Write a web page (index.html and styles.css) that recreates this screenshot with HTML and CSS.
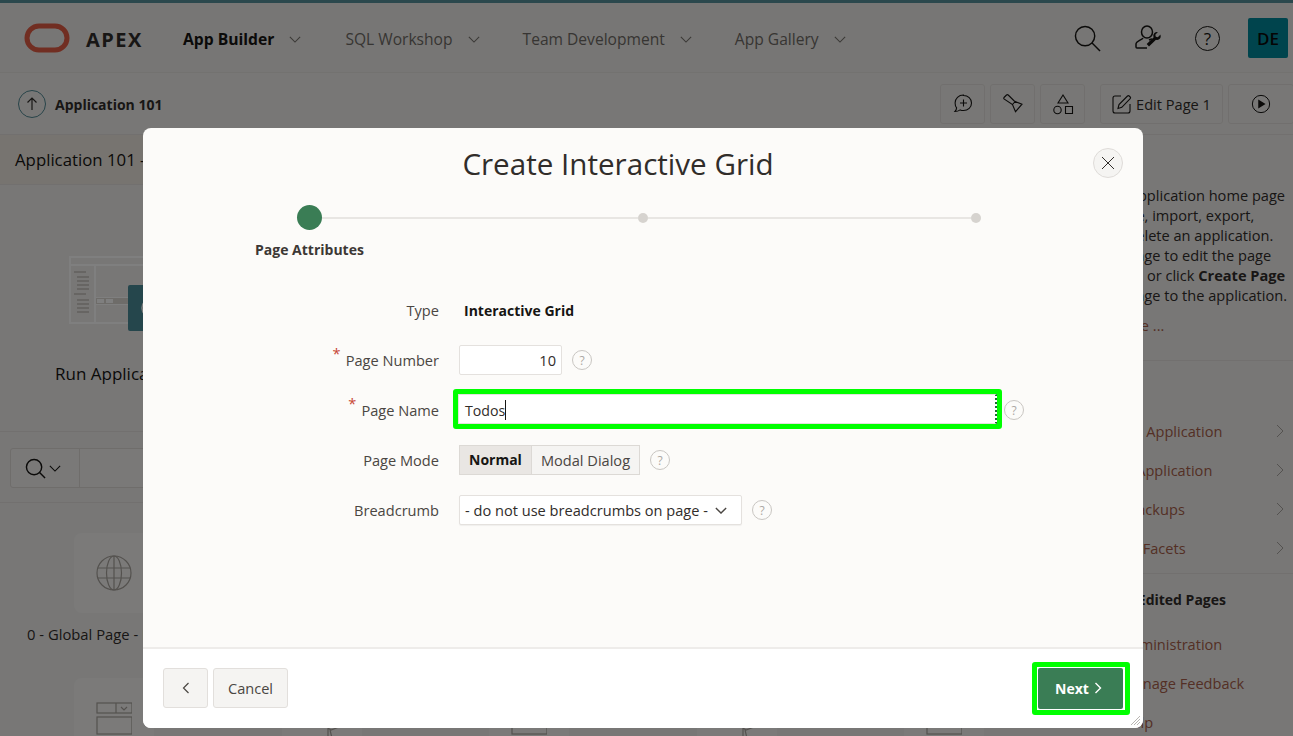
FILE: index.html
```html
<!DOCTYPE html>
<html lang="en">
<head>
    <meta charset="UTF-8">
    <meta name="viewport" content="width=device-width, initial-scale=1.0">
    <title>Create Interactive Grid</title>
    <link rel="stylesheet" href="styles.css">
</head>
<body>

<!-- page behind the dialog -->
<header class="header">
    <svg class="logo" width="46" height="30" viewBox="0 0 46 30"><rect x="3" y="3" width="40" height="24" rx="12" fill="none" stroke="currentColor" stroke-width="5"/></svg>
    <span class="brand">APEX</span>
    <nav class="nav">
        <a class="nav-item nav-current">App Builder <svg class="chev" width="12" height="7" viewBox="0 0 14 8"><path d="M1 1l6 6 6-6"/></svg></a>
        <a class="nav-item">SQL Workshop <svg class="chev" width="12" height="7" viewBox="0 0 14 8"><path d="M1 1l6 6 6-6"/></svg></a>
        <a class="nav-item">Team Development <svg class="chev" width="12" height="7" viewBox="0 0 14 8"><path d="M1 1l6 6 6-6"/></svg></a>
        <a class="nav-item">App Gallery <svg class="chev" width="12" height="7" viewBox="0 0 14 8"><path d="M1 1l6 6 6-6"/></svg></a>
    </nav>
    <div class="header-tools">
        <svg class="line-icon" width="27" height="27" viewBox="0 0 28 28"><circle cx="11.5" cy="11.5" r="10"/><path d="M18.5 18.5l8.500 8.500"/></svg>
        <svg class="line-icon" width="28" height="28" viewBox="0 0 28 28"><ellipse cx="13" cy="8" rx="5.5" ry="6"/><path d="M9 14c-1 2-7 3-7 6v3c0 .6.4 1 1 1h10M18 15c-1 0-2 .5-3 1"/><path class="wrench" d="M26.500 10.500l-2.700 2.700-2-.5-.5-2 2.600-2.600c-2.200-.6-4.600 1-4.600 3.500 0 .7.100 1.200.4 1.700l-7 6.700 2.300 2.500 7-6.800c2.800 1 5.500-1.400 4.500-4.700z"/></svg>
        <span class="help-large">?</span>
        <span class="avatar">DE</span>
    </div>
</header>

<div class="toolbar">
    <span class="up-circle"><svg width="12" height="14" viewBox="0 0 12 14"><path d="M6 13V1M1.500 5.500L6 1l4.500 4.500"/></svg></span>
    <span class="crumb">Application 101</span>
    <div class="toolbar-actions">
        <button class="tool-btn"><svg class="line-icon" width="22" height="22" viewBox="0 0 22 22"><path d="M11.500 2.500c4.500 0 8 3 8 7.500s-3.500 7.500-8 7.500c-1.200 0-2.300-.2-3.300-.6-1.500 1-3.200 1.600-5.200 1.600 1-1 1.500-2.200 1.600-3.600-1-1.300-1.500-3-1.500-4.900 0-4.500 3.500-8 8.400-8zM11.500 6.500v7M8 10h7"/></svg></button>
        <button class="tool-btn"><svg class="line-icon" width="22" height="22" viewBox="0 0 22 22"><path d="M2 4.500L4.500 2c.6-.5 1.200-.5 1.700 0l6.300 6.200 7.500 3-6.500 7.500-3-7.200L2 5.900c-.3-.4-.3-1 0-1.400zM10.500 11.500l3-3.300"/></svg></button>
        <button class="tool-btn"><svg class="line-icon" width="22" height="22" viewBox="0 0 22 22"><path d="M11 2l5 8H6zM13.500 13.500h7v7h-7z"/><circle cx="5.500" cy="17" r="3.700"/></svg></button>
        <button class="tool-btn tool-edit"><svg class="line-icon" width="20" height="20" viewBox="0 0 20 20"><path d="M9 2H3c-1 0-2 .8-2 2v13c0 1 .8 2 2 2h13c1 0 2-.8 2-2v-7"/><path d="M6 14.500l1-4L15.500 2c.6-.5 1.200-.5 1.700 0l1 1c.5.500.5 1.200 0 1.700L9.800 13.300z"/></svg> Edit Page 1</button>
        <button class="tool-btn tool-run"><svg class="line-icon" width="20" height="20" viewBox="0 0 22 22"><circle cx="11" cy="11" r="9.500"/><path class="solid" d="M8 6l8 5-8 5z"/></svg></button>
    </div>
</div>

<div class="workspace">
    <main class="main">
        <h2 class="app-title">Application 101 - Todos</h2>
        <section class="hero">
            <div class="hero-item">
                <svg class="hero-art" width="106" height="76" viewBox="0 0 106 76">
                    <rect class="art-frame" x="1" y="1" width="104" height="66"/>
                    <path class="art-frame" d="M1 9h104M26 9v58M26 42h79M26 48h79"/>
                    <rect class="art-bar" x="27" y="42" width="78" height="6"/>
                    <path class="art-blocks" d="M28 45h7M37 45h7"/>
                    <path class="art-lines" d="M5 16h12M8 21h12M8 25h12M8 29h12M8 33h12M5 38h12M8 44h12M8 48h12M8 52h12M8 56h12"/>
                    <rect class="art-teal" x="59" y="29" width="47" height="46" rx="2"/>
                    <circle class="art-ring" cx="82" cy="52" r="9"/>
                </svg>
                <span class="hero-label">Run Application</span>
            </div>
        </section>
        <div class="search-row">
            <div class="search-box">
                <span class="search-btn">
                    <svg class="line-icon" width="21" height="21" viewBox="0 0 22 22"><circle cx="9.500" cy="9.500" r="8"/><path d="M15 15l6 6"/></svg>
                    <svg class="chev chev-dark" width="12" height="7" viewBox="0 0 14 8"><path d="M1 1l6 6 6-6"/></svg>
                </span>
            </div>
        </div>
        <div class="page-grid">
            <div class="page-card">
                <span class="card-tile">
                    <svg class="card-icon" width="36" height="36" viewBox="0 0 36 36"><circle cx="18" cy="18" r="17"/><ellipse cx="18" cy="18" rx="7.500" ry="17"/><path d="M18 1v34M1.500 13h33M1.500 23h33"/></svg>
                </span>
                <span class="card-label">0 - Global Page - Desktop</span>
            </div>
            <div class="page-card"><span class="card-tile"></span></div>
            <div class="page-card"><span class="card-tile"></span></div>
            <div class="page-card"><span class="card-tile"></span></div>
            <div class="page-card"><span class="card-tile"></span></div>

            <div class="page-card">
                <span class="card-tile card-tile-low">
                    <svg class="card-icon" width="36" height="36" viewBox="0 0 36 36"><rect x="1" y="1" width="35" height="10"/><path d="M20 1v10M25 5l3 3 3-3"/><rect x="1" y="15" width="35" height="17"/></svg>
                </span>
            </div>
            <div class="page-card">
                <span class="card-tile card-tile-low">
                    <svg class="card-icon" width="36" height="36" viewBox="0 0 36 36"><path d="M24 36V26l3 2 8-3M28 36l-2-8"/></svg>
                </span>
            </div>
            <div class="page-card">
                <span class="card-tile card-tile-low">
                    <svg class="card-icon" width="36" height="36" viewBox="0 0 36 36"><rect x="1" y="15" width="35" height="17"/></svg>
                </span>
            </div>
            <div class="page-card">
                <span class="card-tile card-tile-low">
                    <svg class="card-icon" width="36" height="36" viewBox="0 0 36 36"><path d="M24 36V26l3 2 8-3M28 36l-2-8"/></svg>
                </span>
            </div>
            <div class="page-card">
                <span class="card-tile card-tile-low">
                    <svg class="card-icon" width="36" height="36" viewBox="0 0 36 36"><rect x="1" y="15" width="35" height="17"/></svg>
                </span>
            </div>
        </div>
    </main>

    <aside class="sidebar">
        <p class="about">In application home page<br>Save, import, export,<br>&thinsp;a delete an application.<br>&thinsp;a page to edit the page<br>info, or click <b>Create Page</b><br>&thinsp;a page to the application.</p>
        <p class="about-more"><a>More ...</a></p>
        <div class="side-section side-tasks">
            <a class="side-link">Edit&ensp;Application <svg class="side-chev" width="8" height="14" viewBox="0 0 8 14"><path d="M1 1l6 6-6 6"/></svg></a>
            <a class="side-link">Go Application <svg class="side-chev" width="8" height="14" viewBox="0 0 8 14"><path d="M1 1l6 6-6 6"/></svg></a>
            <a class="side-link">Is Backups <svg class="side-chev" width="8" height="14" viewBox="0 0 8 14"><path d="M1 1l6 6-6 6"/></svg></a>
            <a class="side-link">Edit Facets <svg class="side-chev" width="8" height="14" viewBox="0 0 8 14"><path d="M1 1l6 6-6 6"/></svg></a>
        </div>
        <div class="side-section">
            <h3 class="side-title">My Edited Pages</h3>
            <a class="side-link">- Administration</a>
            <a class="side-link">- Manage Feedback</a>
            <a class="side-link">- Help</a>
        </div>
    </aside>
</div>

<div class="overlay"></div>

<!-- wizard dialog -->
<div class="dialog">
    <div class="dialog-head">
        <h1 class="dialog-title">Create Interactive Grid</h1>
        <button class="close-btn"><svg width="14" height="14" viewBox="0 0 14 14"><path d="M1 1l12 12M13 1L1 13"/></svg></button>
    </div>

    <div class="wizard">
        <div class="wizard-track">
            <span class="step-current"></span>
            <span class="step-line step-line-a"></span>
            <span class="step-dot"></span>
            <span class="step-line step-line-b"></span>
            <span class="step-dot"></span>
        </div>
        <div class="step-label">Page Attributes</div>
    </div>

    <form class="form">
        <div class="row">
            <label class="label">Type</label>
            <strong class="value">Interactive Grid</strong>
        </div>
        <div class="row">
            <label class="label"><span class="req">*</span>Page Number</label>
            <input class="input input-number" type="text" value="10">
            <span class="help">?</span>
        </div>
        <div class="row">
            <label class="label"><span class="req">*</span>Page Name</label>
            <span class="mark mark-field">
                <span class="input input-name">Todos<i class="caret"></i></span>
            </span>
            <span class="help help-tight">?</span>
        </div>
        <div class="row">
            <label class="label">Page Mode</label>
            <div class="segments">
                <span class="segment segment-on">Normal</span>
                <span class="segment">Modal Dialog</span>
            </div>
            <span class="help">?</span>
        </div>
        <div class="row">
            <label class="label">Breadcrumb</label>
            <span class="input input-select">- do not use breadcrumbs on page -
                <svg class="chev chev-select" width="12" height="7" viewBox="0 0 14 8"><path d="M1 1l6 6 6-6"/></svg>
            </span>
            <span class="help">?</span>
        </div>
    </form>

    <div class="dialog-foot">
        <button class="btn btn-back"><svg width="8" height="12" viewBox="0 0 8 12"><path d="M6.500 1l-5 5 5 5"/></svg></button>
        <button class="btn btn-cancel">Cancel</button>
        <span class="mark mark-next">
            <button class="btn-next">Next <svg width="8" height="12" viewBox="0 0 8 12"><path d="M1.500 1l5 5-5 5"/></svg></button>
        </span>
    </div>
    <svg class="resize" width="11" height="11" viewBox="0 0 11 11"><path d="M1 10l9-9M4 10l6-6M7 10l3-3"/></svg>
</div>

</body>
</html>
```

FILE: styles.css
```css
* {
    box-sizing: border-box;
}
body {
    position: relative;
    margin: 0;
    width: 1293px;
    height: 736px;
    overflow: hidden;
    font-family: "Open Sans", Arial, sans-serif;
    font-size: 14.6px;
    color: #161513;
    background-color: #f1efed;
}
button {
    font-family: inherit;
}
svg {
    display: block;
    flex: none;
}
.line-icon {
    fill: none;
    stroke: #161513;
    stroke-width: 1.5;
}
.line-icon .solid {
    fill: #161513;
    stroke: none;
}
.line-icon .wrench {
    fill: #161513;
    stroke: none;
}
.chev {
    fill: none;
    stroke: #77736e;
    stroke-width: 1.3;
}
.chev-dark {
    stroke: #161513;
}

/* header */
.header {
    display: flex;
    align-items: center;
    height: 73px;
    padding: 1px 5px 0 24px;
    border-top: 3px solid #57919b;
    border-bottom: 1px solid #e7e4e1;
    background-color: #efedea;
}
.logo {
    color: #e25c45;
}
.brand {
    margin: 2px 0 0 16px;
    font-size: 20px;
    font-weight: 700;
    letter-spacing: 1.5px;
    color: #312d2a;
}
.nav {
    display: flex;
    margin: 2px 0 0 40px;
}
.nav-item {
    display: flex;
    align-items: center;
    gap: 15px;
    margin-right: 43px;
    font-size: 15.6px;
    color: #6f6b66;
}
.nav-current {
    margin-right: 44px;
    font-size: 15.7px;
    font-weight: 700;
    color: #161513;
}
.header-tools {
    display: flex;
    align-items: center;
    gap: 33px;
    margin-left: auto;
}
.help-large {
    display: flex;
    align-items: center;
    justify-content: center;
    width: 25px;
    height: 25px;
    border: 1.5px solid #161513;
    border-radius: 50%;
    font-size: 17px;
}
.avatar {
    display: flex;
    align-items: center;
    justify-content: center;
    width: 40px;
    height: 40px;
    margin-left: -5px;
    border-radius: 2px;
    font-size: 17px;
    font-weight: 600;
    color: #0a0a0a;
    background-color: #00899b;
}

/* toolbar */
.toolbar {
    display: flex;
    align-items: center;
    height: 62px;
    padding: 1px 0 0 18px;
    border-bottom: 1px solid #e4e1de;
    background-color: #f1efed;
}
.up-circle {
    display: flex;
    align-items: center;
    justify-content: center;
    width: 28px;
    height: 28px;
    border: 1px solid #4f8792;
    border-radius: 50%;
}
.up-circle svg {
    fill: none;
    stroke: #312d2a;
    stroke-width: 1.2;
}
.crumb {
    margin-left: 9px;
    font-size: 14px;
    font-weight: 700;
    color: #312d2a;
}
.toolbar-actions {
    display: flex;
    gap: 5px;
    margin-left: auto;
    margin-right: -1px;
}
.toolbar-actions .line-icon {
    stroke-width: 1.1;
}
.tool-btn {
    display: flex;
    align-items: center;
    justify-content: center;
    gap: 4px;
    width: 45px;
    height: 40px;
    padding: 0;
    border: 1px solid #e2dfdc;
    border-radius: 3px;
    font-size: 14.6px;
    color: #312d2a;
    background-color: #f1efed;
}
.tool-edit {
    width: 123px;
    margin-left: 10px;
}
.tool-run {
    width: 66px;
}

/* main column */
.workspace {
    display: flex;
    height: 601px;
    overflow: hidden;
}
.main {
    width: 1113px;
    flex: none;
}
.app-title {
    height: 50px;
    margin: 0;
    padding-left: 15px;
    border-bottom: 1px solid #e4e1de;
    font-size: 16.8px;
    font-weight: 400;
    line-height: 49px;
    background-color: #efe9e0;
}
.hero {
    height: 247px;
    padding: 71px 0 0 55px;
    border-bottom: 1px solid #e4e1de;
}
.hero-item {
    display: flex;
    flex-direction: column;
    align-items: flex-start;
}
.hero-art {
    margin-left: 14px;
}
.art-frame {
    fill: none;
    stroke: #fff;
    stroke-width: 2;
}
.art-bar {
    fill: #dcd8d3;
}
.art-blocks {
    fill: none;
    stroke: #fff;
    stroke-width: 4;
}
.art-lines {
    stroke: #c4bfb9;
    stroke-width: 1.500;
    fill: none;
}
.art-teal {
    fill: #4a8c99;
}
.art-ring {
    fill: none;
    stroke: #fff;
    stroke-width: 1.500;
}
.hero-label {
    margin-top: 30px;
    font-size: 17px;
    line-height: 24px;
}
.search-row {
    height: 71px;
    padding: 16px 10px 0;
    border-bottom: 1px solid #e4e1de;
}
.search-box {
    height: 40px;
    border: 1px solid #dedad6;
    border-radius: 3px;
    background-color: #f5f3f1;
}
.search-btn {
    display: flex;
    align-items: center;
    gap: 3px;
    width: 69px;
    height: 38px;
    padding-left: 14px;
    border-right: 1px solid #dedad6;
}
.page-grid {
    display: grid;
    grid-template-columns: repeat(5, 207.5px);
    row-gap: 33px;
    padding: 30px 0 0 27px;
}
.page-card {
    display: flex;
    flex-direction: column;
    align-items: flex-start;
    min-height: 112px;
}
.card-tile {
    display: flex;
    align-items: center;
    justify-content: center;
    width: 80px;
    height: 80px;
    margin-left: 47px;
    border-radius: 8px;
    background-color: #f6f5f3;
}
.card-tile-low {
    align-items: flex-start;
    padding-top: 24px;
}
.card-icon {
    fill: none;
    stroke: #a8a39d;
    stroke-width: 1.200;
}
.card-label {
    margin-top: 11px;
    font-size: 14.8px;
    line-height: 20px;
    white-space: nowrap;
    color: #312d2a;
}

/* right column */
.sidebar {
    width: 180px;
    flex: none;
    white-space: nowrap;
}
.about {
    margin: 0;
    padding-top: 50px;
    line-height: 20px;
    color: #312d2a;
}
.about-more {
    margin: 10px 0 0;
    line-height: 20px;
    color: #a85f4a;
}
.side-section {
    display: flex;
    flex-direction: column;
    padding-bottom: 4px;
}
.side-tasks {
    margin-top: 25px;
    padding-top: 50px;
    padding-bottom: 6px;
    border-top: 1px solid #e4e1de;
    border-bottom: 1px solid #e4e1de;
}
.side-link {
    display: flex;
    align-items: center;
    justify-content: space-between;
    height: 39px;
    padding-right: 9px;
    color: #a85f4a;
}
.side-chev {
    fill: none;
    stroke: #a9a5a0;
    stroke-width: 1;
}
.side-title {
    margin: 16px 0 14px;
    font-size: 14px;
    line-height: 20px;
    color: #312d2a;
}

.overlay {
    position: absolute;
    inset: 0;
    background-color: rgba(0, 0, 0, 0.5);
}

/* dialog */
.dialog {
    position: absolute;
    left: 143px;
    top: 128px;
    display: flex;
    flex-direction: column;
    width: 1000px;
    height: 600px;
    overflow: hidden;
    border-radius: 8px;
    background-color: #fcfbf9;
}
.dialog-head {
    display: flex;
    align-items: center;
    height: 70px;
    padding: 0 20px 0 0;
}
.dialog-title {
    flex: 1;
    margin: 0;
    padding-top: 2px;
    font-size: 29.6px;
    font-weight: 500;
    line-height: 68px;
    text-align: center;
    color: #312d2a;
}
.close-btn {
    display: flex;
    align-items: center;
    justify-content: center;
    width: 30px;
    height: 30px;
    padding: 0;
    border: 1px solid #dfdcd9;
    border-radius: 50%;
    background-color: #f5f4f2;
}
.close-btn svg {
    fill: none;
    stroke: #312d2a;
    stroke-width: 1;
}
.wizard-track {
    display: flex;
    align-items: center;
    padding: 7px 0 0 154px;
}
.step-current {
    width: 25px;
    height: 25px;
    border-radius: 50%;
    background-color: #3a7d55;
}
.step-dot {
    width: 10px;
    height: 10px;
    border-radius: 50%;
    background-color: #d6d3cf;
}
.step-line {
    height: 2px;
    background-color: #e8e6e3;
}
.step-line-a {
    width: 316px;
}
.step-line-b {
    width: 323px;
}
.step-label {
    width: 333px;
    margin-top: 10px;
    font-size: 14px;
    font-weight: 700;
    line-height: 20px;
    text-align: center;
    color: #3c3835;
}
.form {
    flex: 1;
    padding-top: 25px;
}
.row {
    display: flex;
    align-items: center;
    height: 50px;
}
.label {
    display: flex;
    justify-content: flex-end;
    width: 296px;
    margin-right: 20px;
    color: #4a4642;
}
.req {
    margin: -7px 5px 0 0;
    color: #c74634;
}
.value {
    margin-left: 5px;
    font-size: 14px;
    color: #161513;
}
.input {
    height: 30px;
    padding: 0 5px;
    border: 1px solid #e4e1de;
    border-radius: 2px;
    font: inherit;
    color: #312d2a;
    background-color: #fff;
}
.input-number {
    width: 103px;
    text-align: right;
}
.input-name {
    display: flex;
    align-items: center;
    width: 539px;
    padding: 2px 5px 0 6px;
    border-right: 2px dotted #1f6b34;
    border-radius: 0;
    font-size: 14.2px;
}
.caret {
    width: 1px;
    height: 20px;
    background-color: #161513;
}
.mark {
    display: block;
    margin: 0;
    border: 5px solid #00ff00;
    border-radius: 3px;
}
.mark-field {
    margin: 0 0 2px -6px;
}
.help {
    display: flex;
    align-items: center;
    justify-content: center;
    width: 20px;
    height: 20px;
    margin-left: 10px;
    border: 1px solid #c9c6c2;
    border-radius: 50%;
    font-size: 12px;
    color: #aca8a3;
}
.help-tight {
    margin-left: 2px;
}
.segments {
    display: flex;
    height: 30px;
    border: 1px solid #dcd9d5;
    background-color: #f5f4f2;
}
.segment {
    padding: 0 9px;
    line-height: 28px;
    color: #4a4642;
}
.segment-on {
    border-right: 1px solid #dcd9d5;
    font-size: 14px;
    font-weight: 700;
    color: #161513;
    background-color: #e9e6e3;
}
.input-select {
    display: flex;
    align-items: center;
    justify-content: space-between;
    width: 283px;
    padding-right: 14px;
    box-shadow: 0 1px 1px rgba(0, 0, 0, 0.05);
}
.chev-select {
    stroke: #4a4642;
    stroke-width: 1.6;
}
.dialog-foot {
    display: flex;
    align-items: center;
    gap: 5px;
    height: 81px;
    padding: 0 13px 1px 20px;
    border-top: 2px solid #eeecea;
    background-color: #fff;
}
.btn {
    height: 40px;
    padding: 0;
    border: 1px solid #e2dfdc;
    border-radius: 3px;
    font-size: 14.6px;
    color: #4a4642;
    background-color: #f5f4f2;
}
.btn svg {
    fill: none;
    stroke: #4a4642;
    stroke-width: 1.2;
    margin: 0 auto;
}
.btn-back {
    width: 45px;
}
.btn-cancel {
    width: 75px;
}
.mark-next {
    margin-left: auto;
    padding: 1px 2px 1px 1px;
    background-color: #fff;
}
.btn-next {
    display: flex;
    align-items: center;
    justify-content: center;
    gap: 5px;
    width: 85px;
    height: 41px;
    padding: 0 4px 0 0;
    border: 0;
    border-radius: 2px;
    font-size: 14px;
    font-weight: 700;
    color: #fff;
    background-color: #3a7d55;
}
.btn-next svg {
    fill: none;
    stroke: #fff;
    stroke-width: 1.4;
}
.resize {
    position: absolute;
    right: 2px;
    bottom: 2px;
    fill: none;
    stroke: #b9b6b2;
    stroke-width: 1;
}
```
